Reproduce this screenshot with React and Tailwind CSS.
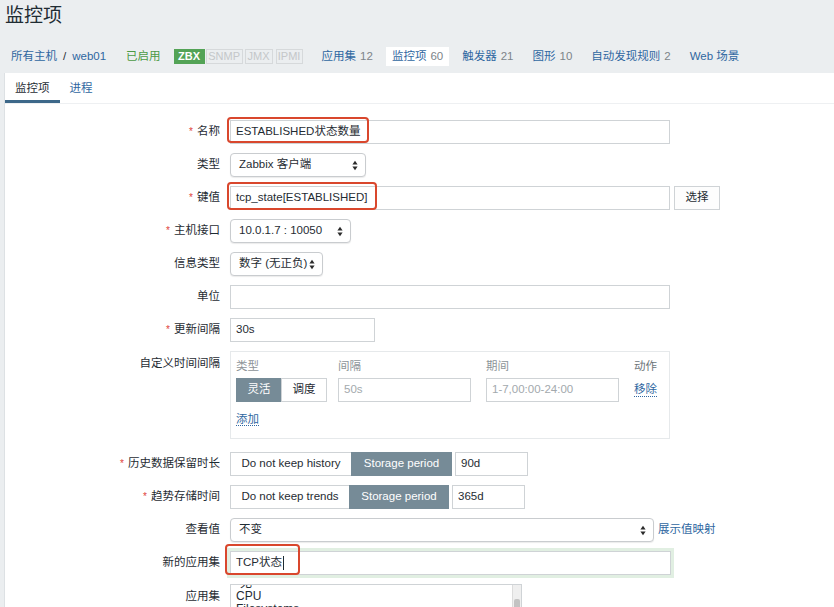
import React from "react"

const font = "font-['Liberation_Sans','Noto_Sans_CJK_SC',sans-serif]"

function Arrows() {
  return (
    <svg width="6" height="11" viewBox="0 0 6 11" className="shrink-0">
      <path d="M3 0.8L5.6 4.4H0.4Z" fill="#2b2b2b" />
      <path d="M3 10.2L0.4 6.6H5.6Z" fill="#2b2b2b" />
    </svg>
  )
}

function Select({ width, children }) {
  return (
    <div
      className={`h-[24px] ${width} flex items-center justify-between rounded-[4px] border border-[#c9cccf] bg-white pl-[8px] pr-[7px] shadow-[0_1px_1px_rgba(0,0,0,0.08)]`}
    >
      <span className="whitespace-nowrap">{children}</span>
      <Arrows />
    </div>
  )
}

function Input({ width, children, className = "" }) {
  return (
    <div
      className={`h-[24px] ${width} flex items-center border border-[#cfd3d6] bg-white px-[5px] whitespace-nowrap ${className}`}
    >
      {children}
    </div>
  )
}

function Highlight({ className }) {
  return (
    <div
      className={`pointer-events-none absolute rounded-[4px] border-2 border-[#d9472d] ${className}`}
    />
  )
}

function Row({ label, required, children }) {
  return (
    <div className="grid grid-cols-[215px_1fr] gap-x-[10px] h-[24px]">
      <div className="h-[24px] flex items-center justify-end whitespace-nowrap">
        {required && <span className="text-[#e0433b] text-[10px] leading-none mr-[4px]">*</span>}
        <span>{label}</span>
      </div>
      <div className="flex items-center">{children}</div>
    </div>
  )
}

function Segment({ items, active, widths }) {
  return (
    <div className="flex h-[24px]">
      {items.map((it, i) => (
        <div
          key={it}
          className={`${widths[i]} flex items-center justify-center border whitespace-nowrap ${
            i === active
              ? "bg-[#768b97] border-[#768b97] text-white"
              : "bg-white border-[#cfd3d6] text-[#1f2c33]"
          } ${i > 0 ? "-ml-px" : ""}`}
        >
          {it}
        </div>
      ))}
    </div>
  )
}

function NavItem({ label, count, active }) {
  return (
    <div
      className={`h-[19px] px-[6px] flex items-center whitespace-nowrap ${
        active ? "bg-white" : ""
      }`}
    >
      <span className="text-[#2f67a1]">{label}</span>
      {count && <span className="text-[#7d8489] ml-[4px]">{count}</span>}
    </div>
  )
}

export default function App() {
  return (
    <div
      className={`${font} w-[834px] h-[607px] overflow-hidden bg-[#ebeef0] text-[11.5px] text-[#1f2c33]`}
    >
      {/* page title */}
      <div className="h-[40px] pl-[5px] pt-[2px] text-[19px] leading-[28px] text-[#1f2c33]">
        监控项
      </div>

      {/* host navigation */}
      <div className="h-[33px] flex items-center pl-[5px] gap-[7px]">
        <div className="px-[6px] flex items-center whitespace-nowrap">
          <span className="text-[#2f67a1]">所有主机</span>
          <span className="mx-[6px] text-[#1f2c33]">/</span>
          <span className="text-[#2f67a1]">web01</span>
        </div>
        <div className="px-[6px] text-[#4c9a45] whitespace-nowrap ml-[1px]">已启用</div>
        <div className="flex items-center h-[15px] text-[11px] leading-[13px]">
          <span className="h-[15px] w-[31px] flex items-center justify-center bg-[#53a356] text-white font-bold">
            ZBX
          </span>
          <span className="h-[15px] w-[37px] flex items-center justify-center border border-[#d6d9db] text-[#c4c7c9] ml-[1px]">
            SNMP
          </span>
          <span className="h-[15px] w-[28px] flex items-center justify-center border border-[#d6d9db] text-[#c4c7c9] ml-[2px]">
            JMX
          </span>
          <span className="h-[15px] w-[27px] flex items-center justify-center border border-[#d6d9db] text-[#c4c7c9] ml-[3px]">
            IPMI
          </span>
        </div>
        <div className="flex items-center gap-[7px] ml-[6px]">
          <NavItem label="应用集" count="12" />
          <NavItem label="监控项" count="60" active />
          <NavItem label="触发器" count="21" />
          <NavItem label="图形" count="10" />
          <NavItem label="自动发现规则" count="2" />
          <NavItem label="Web 场景" />
        </div>
      </div>

      {/* white panel */}
      <div className="ml-[4px] h-full bg-white border-l border-[#dde1e4]">
        {/* tabs */}
        <div className="h-[31px] flex items-end border-b border-[#eef0f2]">
          <div className="h-[31px] px-[10px] pt-[6px] flex items-center border-b-[3px] border-[#3d6889]">
            监控项
          </div>
          <div className="h-[31px] px-[10px] pt-[6px] flex items-center text-[#2f67a1] border-b-[3px] border-transparent">
            进程
          </div>
        </div>

        {/* form */}
        <div className="flex flex-col gap-[9px] pt-[16px]">
          <Row label="名称" required>
            <div className="relative">
              <Input width="w-[440px]">ESTABLISHED状态数量</Input>
              <Highlight className="-top-[3px] -left-[3px] w-[142px] h-[26px]" />
            </div>
          </Row>

          <Row label="类型">
            <Select width="w-[136px]">Zabbix 客户端</Select>
          </Row>

          <Row label="键值" required>
            <div className="relative">
              <Input width="w-[440px]">tcp_state[ESTABLISHED]</Input>
              <Highlight className="-top-[4px] -left-[3px] w-[150px] h-[28px]" />
            </div>
            <div className="ml-[4px] h-[24px] w-[46px] flex items-center justify-center border border-[#cfd3d6] bg-[#fdfdfd]">
              选择
            </div>
          </Row>

          <Row label="主机接口" required>
            <Select width="w-[121px]">10.0.1.7 : 10050</Select>
          </Row>

          <Row label="信息类型">
            <Select width="w-[93px]">数字 (无正负)</Select>
          </Row>

          <Row label="单位">
            <Input width="w-[440px]" />
          </Row>

          <Row label="更新间隔" required>
            <Input width="w-[145px]">30s</Input>
          </Row>

          <div className="grid grid-cols-[215px_1fr] gap-x-[10px] mb-[4px]">
            <div className="text-right leading-[24px] whitespace-nowrap">自定义时间间隔</div>
            <div className="w-[440px] h-[88px] border border-[#e6e9eb] px-[5px] pt-[7px]">
              <div className="grid grid-cols-[102px_148px_148px_auto] leading-[14px] text-[#8d9498]">
                <span>类型</span>
                <span>间隔</span>
                <span>期间</span>
                <span className="text-[#6c7479]">动作</span>
              </div>
              <div className="grid grid-cols-[102px_148px_148px_auto] mt-[5px] items-center">
                <Segment items={["灵活", "调度"]} active={0} widths={["w-[46px]", "w-[46px]"]} />
                <Input width="w-[133px]" className="text-[#a3a9ad]">50s</Input>
                <Input width="w-[133px]" className="text-[#a3a9ad]">1-7,00:00-24:00</Input>
                <span className="text-[#2f67a1] border-b border-dotted border-[#2f67a1] leading-[13px] w-fit">
                  移除
                </span>
              </div>
              <div className="mt-[9px]">
                <span className="text-[#2f67a1] border-b border-dotted border-[#2f67a1] leading-[14px]">
                  添加
                </span>
              </div>
            </div>
          </div>

          <Row label="历史数据保留时长" required>
            <Segment
              items={["Do not keep history", "Storage period"]}
              active={1}
              widths={["w-[122px]", "w-[101px]"]}
            />
            <Input width="w-[73px]" className="ml-[3px]">90d</Input>
          </Row>

          <Row label="趋势存储时间" required>
            <Segment
              items={["Do not keep trends", "Storage period"]}
              active={1}
              widths={["w-[120px]", "w-[100px]"]}
            />
            <Input width="w-[73px]" className="ml-[3px]">365d</Input>
          </Row>

          <Row label="查看值">
            <Select width="w-[424px]">不变</Select>
            <span className="ml-[4px] text-[#2f67a1] whitespace-nowrap">展示值映射</span>
          </Row>

          <Row label="新的应用集">
            <div className="relative">
              <Input
                width="w-[441px]"
                className="border-[#6e9a82] shadow-[0_0_0_3px_#e1efe2]"
              >
                TCP状态<span className="inline-block w-px h-[14px] bg-[#1f2c33] ml-[1px]" />
              </Input>
              <Highlight className="-top-[7px] -left-[5px] w-[75px] h-[31px]" />
            </div>
          </Row>

          <div className="grid grid-cols-[215px_1fr] gap-x-[10px]">
            <div className="text-right leading-[24px]">应用集</div>
            <div className="relative w-[292px] h-[60px] border border-[#cfd3d6] overflow-hidden">
              <div className="pl-[5px] -mt-[8px] text-[12px] leading-[13px]">
                <div>-无-</div>
                <div>CPU</div>
                <div>Filesystems</div>
              </div>
              <div className="absolute right-0 top-0 w-[9px] h-full bg-[#efefef] border-l border-[#dcdcdc]">
                <div className="mt-[14px] mx-[1px] h-[40px] rounded-[2px] bg-[#c3c3c3]" />
              </div>
            </div>
          </div>
        </div>
      </div>
    </div>
  )
}
